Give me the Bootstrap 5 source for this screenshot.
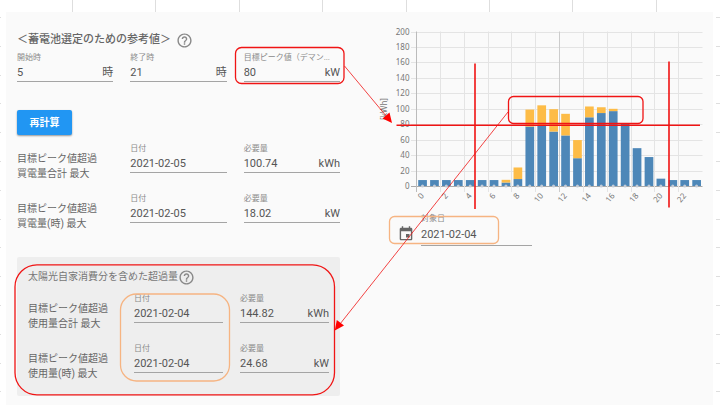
<!DOCTYPE html>
<html lang="ja">
<head>
<meta charset="utf-8">
<meta name="viewport" content="width=device-width, initial-scale=1">
<title>蓄電池選定のための参考値</title>
<link href="https://cdn.jsdelivr.net/npm/bootstrap@5.3.0/dist/css/bootstrap.min.css" rel="stylesheet">
<style>
body { font-family: Roboto, "Noto Sans CJK JP", sans-serif; font-size: 10px; line-height: 15px; color: #666; background: #fff; }
.sheet { min-height: 100vh; padding: 12px 7px 0 6px; }
.overlay-svg { inset: 0; width: 100%; pointer-events: none; }
.panel { background: #fafafa; padding: 12px 7px 9px 11px; min-height: calc(100vh - 12px); }
.split { display: grid; grid-template-columns: 323fr 366fr; }
.chart-side { padding-left: 40px; }
.title-row { height: 24px; }
.title-main { font-size: 11px; font-weight: 500; color: #666; margin: 0 5px 0 0; white-space: nowrap; }
.title-sub { font-size: 10px; font-weight: 400; color: #777; margin: 0; white-space: nowrap; }
.help-btn, .help-btn svg { width: 17px; height: 17px; color: #888; }
.trio { display: grid; grid-template-columns: repeat(3, minmax(0, 1fr)); column-gap: 17px; }
.trio-tall { min-height: 50px; }
.side-text { padding-top: 8px; white-space: nowrap; }
.fld label { display: block; font-size: 8px; line-height: 12px; color: #8a8a8a; }
.fld-line { border-bottom: 1px solid #a4a4a4; height: 18px; }
.fld-line input { font-size: 11px; line-height: 17px; color: #555; min-width: 0; box-shadow: none; }
.fld-line span { font-size: 11px; line-height: 17px; color: #555; }
.calc-btn { margin: 28px 0 8px; width: 55px; height: 25px; padding: 0; font-size: 10px; font-weight: 700; line-height: 25px; border: 0; border-radius: 2px; background: #2196f3; box-shadow: 0 1px 2px #0006; }
.solar { margin-top: 14px; padding: 8px 11px 3px; background: #eee; border-radius: 2px; }
.solar .title-row { margin-bottom: 4px; }
.chart-svg { font-family: "Noto Sans", sans-serif; font-size: 8px; fill: #777; overflow: visible; }
.date-row { gap: 8px; padding: 1px 0 0 19px; }
.date-row .cal { width: 14px; height: 16px; margin-top: 13px; color: #666; }
.date-row .fld { width: 111px; }
.date-row .fld-line { height: 21px; padding-bottom: 2px; }
</style>
</head>
<body>
<main class="sheet position-relative">
  <svg class="overlay-svg position-absolute" viewBox="0 0 720 405" aria-hidden="true"><g id="cells" stroke="#dedede"></g></svg>
  <div class="panel position-relative">
    <div class="split">
      <section class="pt-1">
        <div class="title-row d-flex align-items-center">
          <h1 class="title-main">＜蓄電池選定のための参考値＞</h1>
          <button type="button" class="help-btn btn p-0 border-0 d-flex" aria-label="ヘルプ"><svg viewBox="0 0 24 24" fill="currentColor"><path d="M11 18h2v-2h-2v2zm1-16C6.480 2 2 6.480 2 12s4.480 10 10 10 10-4.480 10-10S17.520 2 12 2zm0 18c-4.410 0-8-3.590-8-8s3.590-8 8-8 8 3.590 8 8-3.590 8-8 8zm0-14c-2.210 0-4 1.790-4 4h2c0-1.100.9-2 2-2s2 .9 2 2c0 2-3 1.750-3 5h2c0-2.250 3-2.500 3-5 0-2.210-1.790-4-4-4z"/></svg></button>
        </div>
        <div class="trio">
          <div class="fld"><label for="from">開始時</label><div class="fld-line d-flex"><input id="from" class="form-control-plaintext p-0" value="5"><span>時</span></div></div>
          <div class="fld"><label for="to">終了時</label><div class="fld-line d-flex"><input id="to" class="form-control-plaintext p-0" value="21"><span>時</span></div></div>
          <div class="fld"><label for="peak" class="text-nowrap">目標ピーク値（デマン...</label><div class="fld-line d-flex"><input id="peak" class="form-control-plaintext p-0" value="80"><span>kW</span></div></div>
        </div>
        <button type="button" class="calc-btn btn btn-primary d-block">再計算</button>
        <div class="trio trio-tall">
          <div class="side-text">目標ピーク値超過<br>買電量合計 最大</div>
          <div class="fld"><label for="d1">日付</label><div class="fld-line d-flex"><input id="d1" class="form-control-plaintext p-0" value="2021-02-05"></div></div>
          <div class="fld"><label for="n1">必要量</label><div class="fld-line d-flex"><input id="n1" class="form-control-plaintext p-0" value="100.74"><span>kWh</span></div></div>
        </div>
        <div class="trio trio-tall">
          <div class="side-text">目標ピーク値超過<br>買電量(時) 最大</div>
          <div class="fld"><label for="d2">日付</label><div class="fld-line d-flex"><input id="d2" class="form-control-plaintext p-0" value="2021-02-05"></div></div>
          <div class="fld"><label for="n2">必要量</label><div class="fld-line d-flex"><input id="n2" class="form-control-plaintext p-0" value="18.02"><span>kW</span></div></div>
        </div>
        <div class="solar">
          <div class="title-row d-flex align-items-center">
            <h2 class="title-sub">太陽光自家消費分を含めた超過量</h2>
            <button type="button" class="help-btn btn p-0 border-0 d-flex" aria-label="ヘルプ"><svg viewBox="0 0 24 24" fill="currentColor"><path d="M11 18h2v-2h-2v2zm1-16C6.480 2 2 6.480 2 12s4.480 10 10 10 10-4.480 10-10S17.520 2 12 2zm0 18c-4.410 0-8-3.590-8-8s3.590-8 8-8 8 3.590 8 8-3.590 8-8 8zm0-14c-2.210 0-4 1.790-4 4h2c0-1.100.9-2 2-2s2 .9 2 2c0 2-3 1.750-3 5h2c0-2.250 3-2.500 3-5 0-2.210-1.790-4-4-4z"/></svg></button>
          </div>
          <div class="trio trio-tall">
            <div class="side-text">目標ピーク値超過<br>使用量合計 最大</div>
            <div class="fld"><label for="d3">日付</label><div class="fld-line d-flex"><input id="d3" class="form-control-plaintext p-0" value="2021-02-04"></div></div>
            <div class="fld"><label for="n3">必要量</label><div class="fld-line d-flex"><input id="n3" class="form-control-plaintext p-0" value="144.82"><span>kWh</span></div></div>
          </div>
          <div class="trio trio-tall">
            <div class="side-text">目標ピーク値超過<br>使用量(時) 最大</div>
            <div class="fld"><label for="d4">日付</label><div class="fld-line d-flex"><input id="d4" class="form-control-plaintext p-0" value="2021-02-04"></div></div>
            <div class="fld"><label for="n4">必要量</label><div class="fld-line d-flex"><input id="n4" class="form-control-plaintext p-0" value="24.68"><span>kW</span></div></div>
          </div>
        </div>
      </section>
      <section class="chart-side">
        <svg id="chart" class="chart-svg d-block w-100" viewBox="380 24 326 188" role="img" aria-label="時間別電力量 [kWh]"></svg>
        <div class="date-row d-flex">
          <svg class="cal" viewBox="2 1 20 22" fill="currentColor" aria-hidden="true"><path d="M17 12h-5v5h5v-5zM16 1v2H8V1H6v2H5c-1.110 0-2 .9-2 2v14c0 1.100.89 2 2 2h14c1.100 0 2-.9 2-2V5c0-1.100-.9-2-2-2h-1V1h-2zm3 18H5V8h14v11z"/></svg>
          <div class="fld"><label for="target">対象日</label><div class="fld-line d-flex"><input id="target" class="form-control-plaintext p-0" value="2021-02-04"></div></div>
        </div>
      </section>
    </div>
  </div>
  <!-- Callouts drawn over the form and the chart -->
  <svg class="overlay-svg position-absolute" viewBox="0 0 720 405" fill="none" stroke="#f01414" aria-hidden="true">
    <g stroke="#f6b482" stroke-width="1.300">
      <rect x="120.500" y="294" width="109" height="87" rx="16"/>
      <rect x="389.500" y="216.500" width="109" height="27" rx="5"/>
    </g>
    <g stroke-width="1.300">
      <rect x="235.500" y="47.500" width="108.500" height="36" rx="6"/>
      <rect x="508.500" y="96.500" width="134.500" height="27" rx="5"/>
      <rect x="15" y="264.800" width="319.500" height="130" rx="22"/>
    </g>
    <path stroke-width="1.600" d="M475 63.500V209M669 61.500V207.500M396.500 125.300H700"/>
    <path stroke-width=".8" d="M344.500 66L387 117M508 112L340 324"/>
    <path fill="#f00" stroke="none" d="M392 123L382.500 118.500L389.500 112.500ZM334.800 330.500L336.800 320L344 325.500Z"/>
  </svg>
</main>
<script src="https://cdn.jsdelivr.net/npm/bootstrap@5.3.0/dist/js/bootstrap.bundle.min.js"></script>
<script>
// Spreadsheet cell lines around the panel
let cells = '';
for (let i = 0; i < 8; i++) { const x = Math.round(72 + i * 83.4) + 0.5; cells += `<path d="M${x} 0V12"/>`; }
for (let i = 0; i < 14; i++) { const y = Math.round(17 + i * 28.8) + 0.5; cells += `<path d="M0 ${y}H1M716 ${y}H720"/>`; }
document.getElementById('cells').innerHTML = cells;

// Hourly values: [grid purchase, total]
const hours = [[7.7,7.7],[7.7,7.7],[7.7,7.7],[7.7,7.7],[7.7,7.7],[7.7,7.7],[7.7,7.7],[4.5,8],[9,24],[77,99],[78,104.5],[70.5,99.5],
  [65.5,93.5],[36,59.5],[89,103],[94.5,102],[97,100],[81,81],[49,49],[37.5,37.5],[9.5,9.5],[7.7,7.7],[7.7,7.7],[7.7,7.7]];
const x0 = 416.5, x1 = 702.5, base = 186, step = (x1 - x0) / 24, unit = 0.772;
let g = '';
for (let v = 0; v <= 200; v += 20) {
  const y = Math.round(base - v * unit) + 0.5;
  g += `<path stroke="${v ? '#e4e4e4' : '#aaa'}" d="M411 ${y}H${x1}"/><text x="409.5" y="${y + 2.5}" text-anchor="end">${v}</text>`;
}
for (let h = 0; h < 24; h += 2) {
  const x = Math.round(x0 + h * step - 0.5) + 0.5;
  g += `<path stroke="${h === 0 ? '#bbb' : h === 12 ? '#ccc' : '#e4e4e4'}" d="M${x} 31.5V192"/>`;
}
hours.forEach(([a, t], h) => {
  const x = x0 + h * step + 1.7, c = x + 4.3, w = 8.7;
  g += `<rect x="${x}" y="${base - a * unit}" width="${w}" height="${a * unit}" fill="#4d87b8"/>`;
  if (t > a) g += `<rect x="${x}" y="${base - t * unit}" width="${w}" height="${(t - a) * unit}" fill="#fdbc47"/>`;
  g += `<circle cx="${c}" cy="186" r="1.5" fill="#c3ccd8"/>`;
  if (h % 2 === 0) g += `<text text-anchor="end" transform="translate(${c + 2} 196) rotate(-50)">${h}</text>`;
});
g += `<text text-anchor="middle" transform="translate(386.5 109) rotate(-90)">[kWh]</text>`;
document.getElementById('chart').innerHTML = g;
</script>
</body>
</html>
